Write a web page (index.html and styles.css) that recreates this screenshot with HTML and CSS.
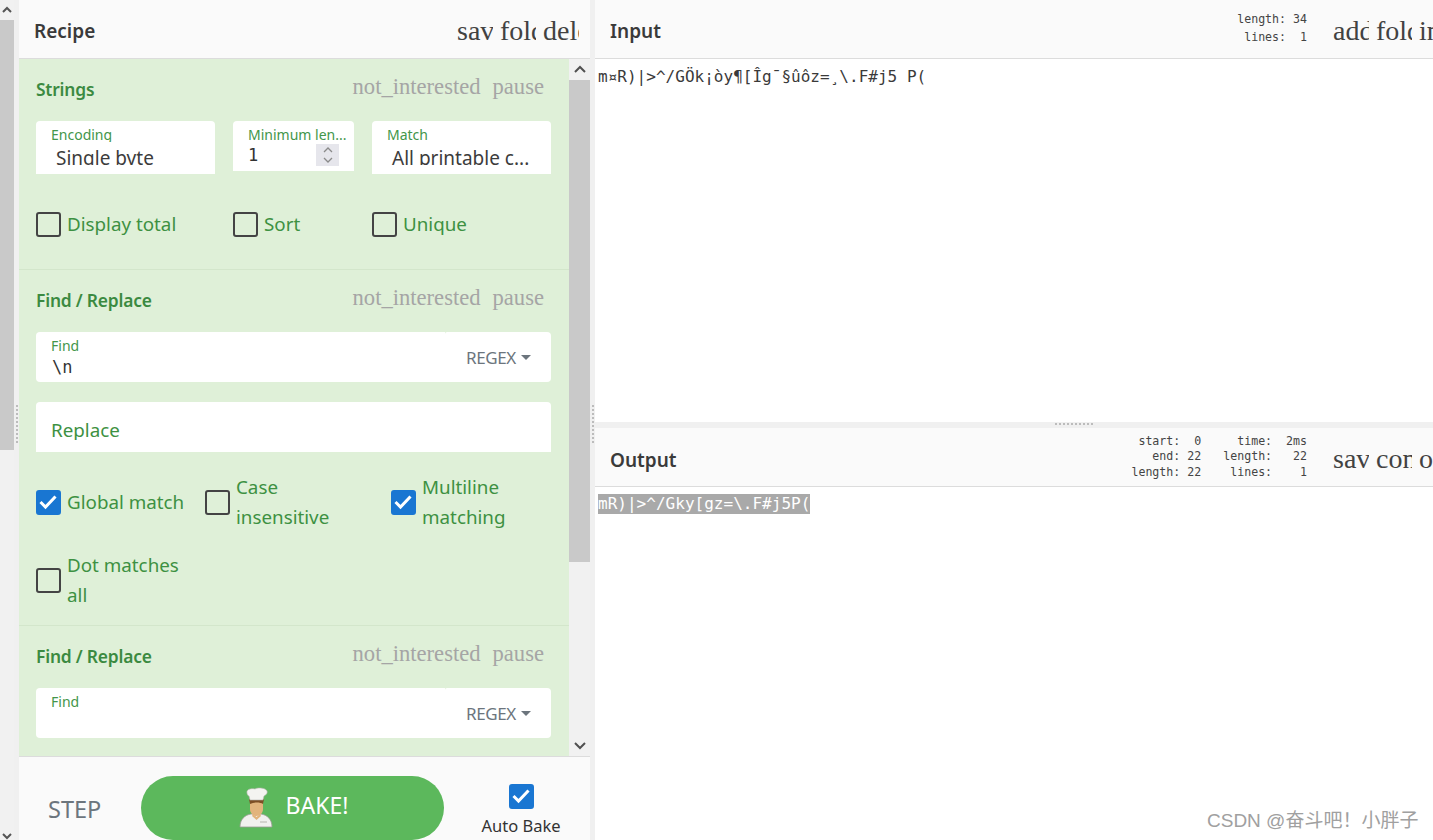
FILE: index.html
```html
<!DOCTYPE html>
<html lang="en">
<head>
<meta charset="utf-8">
<title>CyberChef</title>
<link rel="stylesheet" href="styles.css">
</head>
<body>
<div class="app">
  <div class="rail">
    <div class="rail-bar">
      <div class="arrow"><svg width="12" height="8" viewBox="0 0 12 8"><path d="M2 6l4-4 4 4" fill="none" stroke="#555" stroke-width="2"/></svg></div>
      <div class="rail-thumb"></div>
      <div class="rail-space"></div>
      <div class="arrow arrow-end"><svg width="12" height="8" viewBox="0 0 12 8"><path d="M2 2l4 4 4-4" fill="none" stroke="#555" stroke-width="2"/></svg></div>
    </div>
    <div class="gutter-v"><span class="dots-v"></span></div>
  </div>

  <section class="recipe">
    <header class="head">
      <h1 class="title">Recipe</h1>
      <div class="tools">
        <span class="tool">save</span><span class="tool">folder</span><span class="tool">delete</span>
      </div>
    </header>
    <div class="recipe-body">
      <div class="list">
        <article class="op op-strings">
          <div class="op-head"><h2 class="op-title">Strings</h2><div class="op-tools"><span>not_interested</span><span>pause</span></div></div>
          <div class="fields">
            <div class="field field-wide"><span class="label">Encoding</span><span class="value value-indent">Single byte</span></div>
            <div class="field field-num"><span class="label">Minimum len...</span><span class="num">1</span>
              <span class="spin"><svg width="14" height="20" viewBox="0 0 14 20"><path d="M3 7l4-4 4 4M3 13l4 4 4-4" fill="none" stroke="#8a8a8a" stroke-width="1.3"/></svg></span></div>
            <div class="field field-wide"><span class="label">Match</span><span class="value value-indent">All printable c...</span></div>
          </div>
          <div class="checks checks-three">
            <label class="check"><span class="box"></span><span>Display total</span></label>
            <label class="check"><span class="box"></span><span>Sort</span></label>
            <label class="check"><span class="box"></span><span>Unique</span></label>
          </div>
        </article>

        <article class="op op-find">
          <div class="op-head"><h2 class="op-title">Find / Replace</h2><div class="op-tools"><span>not_interested</span><span>pause</span></div></div>
          <div class="group">
            <div class="group-main"><span class="label">Find</span><span class="mono">\n</span></div>
            <div class="group-side">REGEX<i class="caret"></i></div>
          </div>
          <div class="replace"><span class="replace-text">Replace</span></div>
          <div class="checks checks-flags">
            <label class="check"><span class="box on"><svg width="21" height="21" viewBox="0 0 21 21"><path d="M2.500 10l5 5 10-10.500" fill="none" stroke="#fff" stroke-width="3"/></svg></span><span>Global match</span></label>
            <label class="check"><span class="box"></span><span>Case insensitive</span></label>
            <label class="check"><span class="box on"><svg width="21" height="21" viewBox="0 0 21 21"><path d="M2.500 10l5 5 10-10.500" fill="none" stroke="#fff" stroke-width="3"/></svg></span><span>Multiline matching</span></label>
            <label class="check"><span class="box"></span><span>Dot matches all</span></label>
          </div>
        </article>

        <article class="op op-last">
          <div class="op-head"><h2 class="op-title">Find / Replace</h2><div class="op-tools"><span>not_interested</span><span>pause</span></div></div>
          <div class="group">
            <div class="group-main"><span class="label">Find</span></div>
            <div class="group-side">REGEX<i class="caret"></i></div>
          </div>
        </article>
      </div>
      <div class="scroll">
        <div class="arrow-box"><svg width="14" height="9" viewBox="0 0 14 9"><path d="M2 7l5-5 5 5" fill="none" stroke="#505050" stroke-width="2"/></svg></div>
        <div class="scroll-thumb"></div>
        <div class="scroll-space"></div>
        <div class="arrow-box"><svg width="14" height="9" viewBox="0 0 14 9"><path d="M2 2l5 5 5-5" fill="none" stroke="#505050" stroke-width="2"/></svg></div>
      </div>
    </div>
    <footer class="foot">
      <div class="step">STEP</div>
      <button class="bake" type="button">
        <svg class="chef" width="36" height="42" viewBox="0 0 36 42">
          <path d="M2 40c0-8 5-12 11-13h10c6 1 11 5 11 13z" fill="#f1f1ee" stroke="#9c9c96" stroke-width=".8"/>
          <path d="M12 14h13v8c0 4-3 7-6.500 7S12 26 12 22z" fill="#e2b47c"/>
          <path d="M11 12h15l-1 5c-3-2-9-2-13 0z" fill="#7d4e24"/>
          <path d="M15 27l3.500 3 3.500-3 1 2-4.500 4-4.500-4z" fill="#e2b47c"/>
          <path d="M9 6c-1-4 5-5 8-4 3-2 11-1 12 2 1 3-2 4-3 5l-1 4H12l-1-4c-1 0-2-2-2-3z" fill="#f4f4f1" stroke="#b5b5ae" stroke-width=".6"/>
          <path d="M22 35h7" stroke="#b5b5ae" stroke-width="1"/>
        </svg>
        <span>BAKE!</span>
      </button>
      <label class="auto"><span class="box on"><svg width="21" height="21" viewBox="0 0 21 21"><path d="M2.500 10l5 5 10-10.500" fill="none" stroke="#fff" stroke-width="3"/></svg></span><span class="auto-text">Auto Bake</span></label>
    </footer>
  </section>

  <div class="gutter-v gutter-mid"><span class="dots-v"></span></div>

  <main class="io">
    <section class="pane pane-input">
      <header class="head head-io">
        <h1 class="title">Input</h1>
        <div class="stats stats-input">
          <div class="stat-col">
            <div class="stat">length: 34</div>
            <div class="stat">lines:  1</div>
          </div>
        </div>
        <div class="tools tools-io">
          <span class="tool">add</span><span class="tool">folder_open</span><span class="tool">input</span>
        </div>
      </header>
      <div class="text text-input">m¤R)|&gt;^/GÖk¡òy¶[Îg¯§ûôz=¸\.F#j5 P(</div>
    </section>
    <div class="gutter-h"><span class="dots-h"></span></div>
    <section class="pane pane-output">
      <header class="head head-io">
        <h1 class="title">Output</h1>
        <div class="stats stats-output">
          <div class="stat-col">
            <div class="stat">start:  0</div>
            <div class="stat">end: 22</div>
            <div class="stat">length: 22</div>
          </div>
          <div class="stat-col">
            <div class="stat">time:  2ms</div>
            <div class="stat">length:   22</div>
            <div class="stat">lines:    1</div>
          </div>
        </div>
        <div class="tools tools-io">
          <span class="tool">save</span><span class="tool">content_copy</span><span class="tool">open_in_browser</span>
        </div>
      </header>
      <div class="text"><span class="selected">mR)|&gt;^/Gky[gz=\.F#j5P(</span></div>
    </section>
  </main>
</div>
<div class="watermark">CSDN @奋斗吧！小胖子</div>
</body>
</html>
```

FILE: styles.css
```css
* { box-sizing: border-box; }
html, body { margin: 0; height: 100%; overflow: hidden; }
body { font-family: "Noto Sans", "Open Sans", sans-serif; color: #3a3a3a; background: #fff; }
.app { display: flex; width: 1433px; height: 840px; overflow: hidden; }

/* outer rail */
.rail { display: flex; width: 19px; flex: none; background: #f1f1f1; }
.rail-bar { width: 14px; display: flex; flex-direction: column; }
.arrow { height: 20px; display: flex; align-items: center; justify-content: center; background: #f1f1f1; }
.arrow-end { height: 10px; align-items: flex-end; overflow: hidden; }
.rail-thumb { height: 430px; background: #c9c9c9; }
.rail-space { flex: 1; }
.gutter-v { width: 5px; flex: none; background: #f0f0f0; display: flex; justify-content: center; padding-top: 405px; }
.dots-v { width: 2px; height: 40px; background: repeating-linear-gradient(to bottom, #bcbcbc 0 2px, transparent 2px 4px); }

/* recipe column */
.recipe { width: 571px; flex: none; display: flex; flex-direction: column; height: 840px; }
.head { height: 59px; flex: none; display: flex; align-items: center; background: #fafafa; border-bottom: 1px solid #dcdcdc; padding-left: 15px; overflow: hidden; }
.title { margin: 0; font-size: 19px; font-weight: 600; color: #3a3a3a; flex: 1; line-height: 1; position: relative; top: 2px; }
.tools { display: flex; gap: 7px; padding-right: 11px; flex: none; font-family: "Liberation Serif", serif; font-size: 28px; color: #424242; }
.tool { width: 36px; flex: none; overflow: hidden; white-space: nowrap; line-height: 42px; height: 38px; }
.recipe-body { display: flex; height: 697px; flex: none; }
.list { width: 550px; flex: none; background: #dff0d8; overflow: hidden; }
.op { padding: 0 18px 0 17px; border-bottom: 1px solid #d3e6cb; }
.op-strings { height: 211px; }
.op-find { height: 356px; }
.op-last { border-bottom: 0; }
.op-head { height: 62px; display: flex; align-items: center; justify-content: space-between; }
.op-title { margin: 0; font-size: 17.400px; font-weight: 600; color: #3b8a41; letter-spacing: -.2px; position: relative; top: -1px; }
.op-tools { display: flex; gap: 12px; font-family: "Liberation Serif", serif; font-size: 22.600px; color: #a5a5a5; padding-right: 7px; position: relative; top: -3px; }

.fields { display: flex; gap: 18px; align-items: flex-start; margin-bottom: 35px; }
.field { background: #fff; border-radius: 4px 4px 0 0; position: relative; display: block; }
.field-wide { width: 179px; height: 53px; }
.field-num { width: 121px; height: 50px; }
.label { display: block; height: 14px; line-height: 14px; padding: 7px 0 0 15px; box-sizing: content-box; font-size: 14px; color: #43964a; overflow: hidden; white-space: nowrap; }
.value { display: block; height: 20px; line-height: 27px; margin-top: 3px; font-size: 19px; color: #3c3c3c; overflow: hidden; white-space: nowrap; }
.value-indent { padding-left: 20px; }
.num { display: block; padding: 4px 0 0 15px; font-family: "DejaVu Sans Mono", monospace; font-size: 17px; line-height: 18px; color: #333; }
.spin { position: absolute; left: 83px; top: 23px; width: 23px; height: 22px; background: #e6e6ec; display: flex; align-items: center; justify-content: center; }

.checks { display: grid; font-size: 18.800px; color: #3d9142; line-height: 30px; }
.checks-three { grid-template-columns: 179px 121px 160px; column-gap: 18px; }
.checks-flags { grid-template-columns: 151px 168px 160px; column-gap: 18px; row-gap: 18px; padding-top: 20px; }
.check { display: flex; align-items: center; gap: 6px; }
.box { width: 25px; height: 25px; flex: none; border: 2px solid #444; border-radius: 3px; display: block; }
.box.on { background: #1976d2; border-color: #1976d2; }
.box svg { display: block; }

.group { display: flex; height: 50px; }
.group-main { flex: 1; background: #fff; border-radius: 4px 0 0 4px; }
.mono { display: block; padding: 3px 0 0 16px; font-family: "DejaVu Sans Mono", monospace; font-size: 17px; line-height: 22px; color: #333; }
.group-side { width: 106px; background: #fff; border-radius: 2px 4px 4px 0; display: flex; align-items: center; padding: 0 0 0 21px; font-size: 17px; color: #6c757d; letter-spacing: -.4px; }
.caret { width: 0; height: 0; margin-left: 5px; border: 5px solid transparent; border-top-color: #6c757d; border-bottom: 0; }
.replace { margin-top: 20px; height: 50px; background: #fff; border-radius: 4px 4px 0 0; padding: 15px 0 0 15px; overflow: hidden; }
.replace-text { display: block; font-size: 18.800px; color: #3d9142; line-height: 26px; height: 23px; overflow: hidden; }

.scroll { width: 21px; flex: none; background: #f1f1f1; display: flex; flex-direction: column; }
.arrow-box { height: 21px; display: flex; align-items: center; justify-content: center; flex: none; }
.scroll-thumb { height: 482px; background: #c9c9c9; flex: none; }
.scroll-space { flex: 1; }

.foot { height: 84px; flex: none; background: #fafafa; border-top: 1px solid #dcdcdc; display: flex; padding-top: 19px; }
.step { width: 122px; padding: 17px 0 0 29px; font-size: 23.500px; line-height: 32px; color: #6c757d; flex: none; }
.bake { width: 303px; height: 64px; flex: none; border: 0; border-radius: 32px; background: #5cb85c; color: #fff; font: 400 23px "Noto Sans", sans-serif; display: flex; align-items: center; justify-content: center; gap: 12px; padding: 0 0 0 1px; }
.bake span { position: relative; top: -3px; }
.chef { flex: none; }
.auto { display: flex; flex-direction: column; align-items: center; width: 116px; margin: 8px 0 0 19px; flex: none; }
.auto-text { font-size: 16.500px; line-height: 24px; margin-top: 5px; color: #333; white-space: nowrap; }

/* io */
.gutter-mid { background: #f0f0f0; }
.io { flex: 1; min-width: 0; display: flex; flex-direction: column; height: 840px; }
.pane { display: flex; flex-direction: column; }
.pane-input { height: 422px; }
.pane-output { flex: 1; min-height: 0; }
.pane-output .title { top: 3px; }
.head-io .title { flex: 1; }
.stats { display: flex; gap: 22px; font-family: "DejaVu Sans Mono", monospace; font-size: 11.600px; color: #444; flex: none; margin-right: 26px; }
.stat-col { text-align: right; }
.stat { white-space: pre; }
.stats-input { line-height: 18px; margin-top: -2px; }
.stats-output { line-height: 15.500px; }
.tools-io { padding-right: 0; width: 100px; }
.text { padding: 5px 0 0 3px; font-family: "DejaVu Sans Mono", monospace; font-size: 16px; line-height: 24px; letter-spacing: .02px; color: #3a3a3a; white-space: pre; }
.text-input { padding-top: 6px; }
.selected { background: #a9a9a9; color: #fff; display: inline-block; line-height: 20px; }
.gutter-h { height: 6px; flex: none; background: #f0f0f0; display: flex; justify-content: center; padding: 1px 0 0 119px; }
.dots-h { width: 38px; height: 2px; background: repeating-linear-gradient(to right, #bcbcbc 0 2px, transparent 2px 4px); }
.watermark { position: absolute; left: 1207px; top: 807px; font-family: "Liberation Sans", "Noto Sans CJK SC", sans-serif; font-size: 19px; line-height: 28px; color: #a0a0a0; white-space: nowrap; }
```
